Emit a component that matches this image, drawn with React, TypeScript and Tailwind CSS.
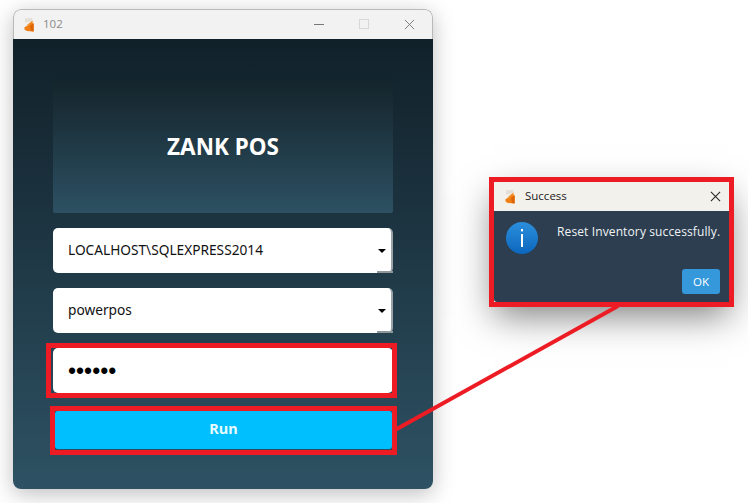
const ui = 'font-["Open_Sans",sans-serif]';
const tahoma = 'font-["Noto_Sans",sans-serif]';

function AppLogo({ className }: { className?: string }) {
  return (
    <svg viewBox="0 0 12 16" className={className}>
      <path d="M1 1.5 L9 0.5 L9 4.5 L1 6 Z" fill="#e4e0d8" />
      <path d="M9.5 3.5 L2.5 9 L9.5 7 Z" fill="#f58a1f" />
      <path d="M0.5 11 L8 6.5 L10.5 6.5 L10.5 15.5 L3 15 L0.5 13.5 Z" fill="#f08016" />
      <path d="M6.5 9.5 L10.5 6.5 L10.5 15.5 L7.5 15.2 Z" fill="#dd6508" />
    </svg>
  );
}

function ComboBox({ value }: { value: string }) {
  return (
    <div
      className={`relative flex h-[45px] items-center rounded-[5px] border-r-2 border-[#9aa3a8] bg-white pl-[15px] text-[13.7px] text-[#111] ${tahoma}`}
    >
      {value}
      <span className="absolute right-[5px] top-[21px] h-0 w-0 border-x-[4px] border-t-[4px] border-x-transparent border-t-black" />
      <span className="absolute -right-[2px] bottom-0 h-[2px] w-[16px] bg-[#8f979b]" />
    </div>
  );
}

function LoginWindow() {
  return (
    <div className="absolute left-[13px] top-[9px] flex h-[480px] w-[420px] flex-col overflow-hidden rounded-[8px] shadow-[0_5px_22px_rgba(0,0,0,0.26)]">
      {/* Title bar */}
      <div className={`flex h-[30px] shrink-0 items-center rounded-t-[8px] border-x border-t border-[#b9b9b9] bg-[#f2f2f2] pb-[1px] text-[11.5px] text-[#8a8a8a] ${ui}`}>
        <AppLogo className="ml-[10px] h-[15px] w-[11px]" />
        <span className="ml-[8px]">102</span>
        <div className="ml-auto flex items-center">
          <span className="mr-[35px] h-px w-[10px] bg-[#777]" />
          <span className="mr-[35px] h-[10px] w-[10px] border border-[#d8d8d8]" />
          <svg viewBox="0 0 12 12" className="mr-[17px] h-[11px] w-[11px]">
            <path d="M1 1 L11 11 M11 1 L1 11" stroke="#777" strokeWidth="1" />
          </svg>
        </div>
      </div>

      {/* Body */}
      <div className="flex flex-1 flex-col bg-gradient-to-b from-[#11212a] to-[#2e5264] px-[40px] pt-[40px]">
        <div className={`flex h-[134px] items-center justify-center rounded-[2px] bg-gradient-to-b from-[#14242b] to-[#2d5163] pt-[2px] text-[22.5px] font-bold text-white ${tahoma}`}>
          ZANK POS
        </div>
        <div className="mt-[15px] flex flex-col gap-[15px]">
          <ComboBox value="LOCALHOST\SQLEXPRESS2014" />
          <ComboBox value="powerpos" />
          <div className="flex h-[45px] items-center rounded-[5px] bg-white pl-[15px] pt-[2px] font-['Liberation_Sans',sans-serif] text-[23px] text-black">
            ••••••
          </div>
        </div>
        <div className={`ml-[2px] mt-[18px] flex h-[38px] w-[337px] items-center justify-center rounded-[3px] bg-[#00bfff] pb-[2px] text-[14.5px] font-bold text-[#e8fbff] ${tahoma}`}>
          Run
        </div>
      </div>
    </div>
  );
}

function SuccessDialog() {
  return (
    <div className="absolute left-[494px] top-[182px] flex h-[120px] w-[235px] flex-col shadow-[0_14px_34px_rgba(0,0,0,0.5)]">
      <div className={`flex h-[29px] shrink-0 items-center bg-[#f3f1ec] pb-[1px] text-[11.5px] text-[#222] ${ui}`}>
        <AppLogo className="ml-[11px] h-[15px] w-[11px]" />
        <span className="ml-[9px]">Success</span>
        <svg viewBox="0 0 12 12" className="ml-auto mr-[8px] h-[11px] w-[11px]">
          <path d="M1 1 L11 11 M11 1 L1 11" stroke="#222" strokeWidth="1.1" />
        </svg>
      </div>
      <div className={`relative flex-1 rounded-bl-[3px] bg-[#2c3e50] ${ui}`}>
        <div className="absolute left-[12px] top-[11px] flex h-[32px] w-[32px] items-center justify-center rounded-full bg-gradient-to-b from-[#2b8fdc] to-[#0b66bd]">
          <svg viewBox="0 0 4 18" className="h-[18px] w-[4px]">
            <rect x="1" y="0" width="2" height="2.4" fill="#fff" />
            <rect x="1" y="5" width="2" height="13" fill="#fff" />
          </svg>
        </div>
        <div className="absolute left-[63px] top-[12px] whitespace-nowrap text-[12px] tracking-[0.12px] text-[#f1f3f5]">
          Reset Inventory successfully.
        </div>
        <div className="absolute right-[9px] top-[58px] flex h-[25px] w-[38px] items-center justify-center rounded-[3px] bg-[#3498db] text-[11.5px] text-white">
          OK
        </div>
      </div>
    </div>
  );
}

export default function App() {
  return (
    <div className="relative h-[503px] w-[748px] overflow-hidden bg-white">
      <LoginWindow />
      <SuccessDialog />

      {/* Red annotations */}
      <div className="absolute left-[46px] top-[343px] h-[55px] w-[351px] border-[5px] border-[#ed1c24]" />
      <div className="absolute left-[50px] top-[406px] h-[49px] w-[347px] border-[5px] border-[#ed1c24]" />
      <div className="absolute left-[489px] top-[177px] h-[130px] w-[245px] border-[5px] border-[#ed1c24]" />
      <svg className="absolute left-0 top-0 h-[503px] w-[748px]" viewBox="0 0 748 503">
        <line x1="395" y1="430" x2="618" y2="306" stroke="#ed1c24" strokeWidth="4" />
      </svg>
    </div>
  );
}
